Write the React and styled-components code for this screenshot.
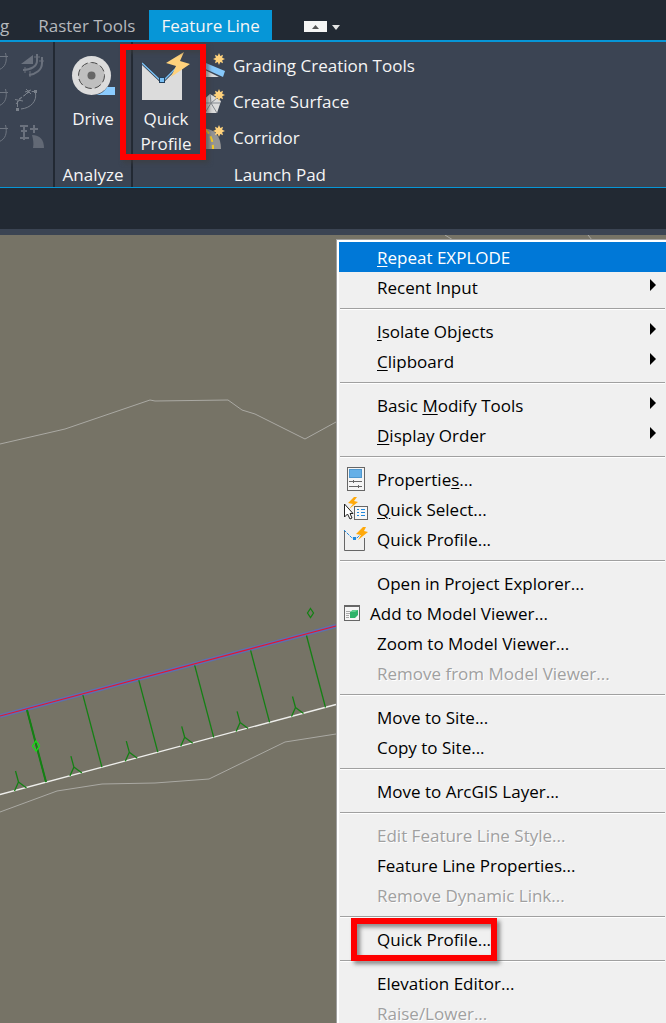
import React from "react";
import styled, { createGlobalStyle } from "styled-components";

const App = () => {
  return (
    <Page>
      <GlobalStyle />
      <TabBar>
        <Tab>g</Tab>
        <Tab>Raster Tools</Tab>
        <Tab $active>Feature Line</Tab>
        <MinimizeButton aria-label="Minimize ribbon">
          <MinimizeIcon />
        </MinimizeButton>
      </TabBar>

      <Ribbon>
        <EditPanel>
          <IconGrid>
            <ToolButton aria-label="Fillet"><ArcIcon /></ToolButton>
            <ToolButton aria-label="Stepped offset"><SteppedIcon /></ToolButton>
            <ToolButton aria-label="Fit curve"><ArcIcon /></ToolButton>
            <ToolButton aria-label="Smooth"><FitIcon /></ToolButton>
            <ToolButton aria-label="Weed"><ArcIcon /></ToolButton>
            <ToolButton aria-label="Elevations from surface"><ElevationIcon /></ToolButton>
          </IconGrid>
        </EditPanel>
        <Panel>
          <PanelBody>
            <LargeButton $width="76px">
              <DriveIcon />
              Drive
            </LargeButton>
          </PanelBody>
          <PanelTitle>Analyze</PanelTitle>
        </Panel>
        <Panel>
          <PanelBody>
            <LargeButton $width="66px">
              <ProfileIcon />
              Quick Profile
              <ButtonCallout />
            </LargeButton>
            <LaunchList>
              <LaunchButton><GradingIcon />Grading Creation Tools</LaunchButton>
              <LaunchButton><SurfaceIcon />Create Surface</LaunchButton>
              <LaunchButton><CorridorIcon />Corridor</LaunchButton>
            </LaunchList>
          </PanelBody>
          <PanelTitle>Launch Pad</PanelTitle>
        </Panel>
      </Ribbon>
      <FileTabs />

      <Workspace>
        <Drawing />
        <ContextMenu>
          {menuGroups.map((group, i) => (
            <MenuGroup key={i}>
              {group.map((item) => (
                <MenuItem key={item.text} $active={item.active} disabled={item.disabled}>
                  <IconCell $narrow={item.narrow}>{item.icon}</IconCell>
                  <ItemLabel>
                    <Label text={item.text} hotkey={item.hotkey} />
                    {item.callout && <ItemCallout />}
                  </ItemLabel>
                  {item.submenu && <SubmenuArrow />}
                </MenuItem>
              ))}
            </MenuGroup>
          ))}
        </ContextMenu>
      </Workspace>
    </Page>
  );
};

// hotkey is the index of the underlined letter
const Label = ({ text, hotkey }) => {
  if (hotkey === undefined) return text;
  return (
    <>
      {text.slice(0, hotkey)}
      <Hotkey>{text[hotkey]}</Hotkey>
      {text.slice(hotkey + 1)}
    </>
  );
};

const MinimizeIcon = () => (
  <svg width="36" height="12" viewBox="0 0 36 12">
    <rect width="23" height="11" fill="#f5f5f5" />
    <path d="M8 8 L11.5 4 L15 8Z" fill="#555" />
    <path d="M28 4 H36 L32 9Z" fill="#e4e4e4" />
  </svg>
);

const ArcIcon = () => (
  <svg width="24" height="24" viewBox="0 0 24 24" fill="none" stroke="#6f7681">
    <path d="M16 3.5 h8 M21.5 0 c2 8 0 14 -6 16.5" />
  </svg>
);

const SteppedIcon = () => (
  <svg width="24" height="24" viewBox="0 0 24 24" fill="none" stroke="#6a717d" strokeWidth="2">
    <path d="M1 11 L13 2 V11Z" fill="#6a717d" stroke="none" />
    <path d="M17 1 V8 C17 13 11 17 3 17 M22 4 V10 C22 17 16 21 9 22" />
    <path d="M14 4 h6 M19 8 h5 M5 14 v6 M10 18 v6" strokeWidth="1" />
  </svg>
);

const FitIcon = () => (
  <svg width="24" height="24" viewBox="0 0 24 24" fill="none" stroke="#7a818b">
    <path d="M15.5 4 C17 12 11 19 1 20" />
    <path d="M-2.5 18 L-2.5 12 M-5 10.5 L3 12 M-4 15 L2 8 M4 7 L9 2 M6 0 L11 5 M5 3 L11 1" />
    <path d="M-4 19 h3 v3 h-3Z M14 1 h3 v3 h-3Z" fill="#7a818b" stroke="none" />
    <path d="M-1 10 L10 2.5 H14" strokeDasharray="3 2" />
  </svg>
);

const ElevationIcon = () => (
  <svg width="24" height="24" viewBox="0 0 24 24" fill="none" stroke="#6a717d">
    <path d="M12 10 C20 10 24 15 24 23 H13 C14 18 13 14 12 10Z" fill="#626975" stroke="none" />
    <path d="M0 1 h8 M4 1 v14 M1 6 h6 M10 4 h8 M14 0 v8 M0 13 h9" strokeWidth="2" />
  </svg>
);

const DriveIcon = () => (
  <svg width="48" height="48" viewBox="0 0 48 48">
    <path d="M27 43 C32 42 36 39 38 35 H46 V43Z" fill="#8bccff" />
    <circle cx="22.5" cy="23.5" r="19.5" fill="#dcdcdc" />
    <circle cx="22.5" cy="23.5" r="13" fill="#bfbfbf" stroke="#4a4a4a" strokeWidth="1" strokeDasharray="7 3" />
    <circle cx="22.5" cy="23.5" r="4" fill="#666" />
  </svg>
);

const ProfileIcon = () => (
  <svg width="48" height="48" viewBox="0 0 48 48">
    <path d="M0 11 L20 30 L40 11 V48 H0Z" fill="#dcdcdc" />
    <path d="M0 11 L18 28 H22 L36 14" fill="none" stroke="#333c4a" strokeWidth="3" />
    <path d="M0 11 L18 28 H22 L36 14" fill="none" stroke="#79c0f5" strokeWidth="1.4" />
    <rect x="17.5" y="25.5" width="5" height="5" fill="#79c0f5" stroke="#23405c" />
    <path d="M42 0 L24 11 L34 14 L29 25 L48 12 L38 9Z" fill="#ffd27c" />
  </svg>
);

const Sun = () => (
  <path
    d="M18 0 L19.3 3 L22 1.7 L21.2 4.7 L24 6 L21.2 7.3 L22 10.3 L19.3 9 L18 12 L16.7 9 L14 10.3 L14.8 7.3 L12 6 L14.8 4.7 L14 1.7 L16.7 3Z"
    fill="#ffd27c"
  />
);

const GradingIcon = () => (
  <svg width="24" height="24" viewBox="0 0 24 24">
    <path d="M0 8 L24 18 L22 24 L0 14Z" fill="#86c8fa" />
    <path d="M0 15 L18 24 H0Z" fill="#dcdcdc" />
    <Sun />
  </svg>
);

const SurfaceIcon = () => (
  <svg width="24" height="24" viewBox="0 0 24 24">
    <path d="M0 13 L9 5 L14 8 L20 12 L16 24 H4Z" fill="#dcdcdc" />
    <path d="M0 14 H19 M10 14 L9 5 M10 14 L4 24 M10 14 L16 24 M10 14 L16 9" stroke="#858a90" fill="none" />
    <Sun />
  </svg>
);

const CorridorIcon = () => (
  <svg width="24" height="24" viewBox="0 0 24 24">
    <path d="M0 4 C12 2 20 10 20 24 H0Z" fill="#959595" />
    <path d="M4 4 C10 10 12 16 12 24" fill="none" stroke="#f7cd25" strokeWidth="2" strokeDasharray="6 3" />
    <Sun />
  </svg>
);

const PropertiesIcon = () => (
  <svg width="24" height="26" viewBox="0 0 24 26" fill="none" stroke="#666">
    <rect x="3.5" y="1.5" width="17" height="23" fill="#f5f5f5" />
    <rect x="5.5" y="3.5" width="12" height="8" fill="#66b0e7" stroke="#4f98cf" />
    <path d="M5 15.5 h13 M9.5 14 v3 M5 20.5 h13 M14.5 19 v3" />
  </svg>
);

const QuickSelectIcon = () => (
  <svg width="24" height="26" viewBox="0 0 24 26">
    <path d="M10 1 L4 7 L9 8 L5 13 L14 6 L10 5 L13 1Z" fill="#ffa90a" />
    <rect x="10.5" y="10.5" width="13" height="13" fill="#f7f7f7" stroke="#666" />
    <path d="M13 13.5 h2 M13 16.5 h2 M13 19.5 h2 M17 13.5 h4 M17 16.5 h4 M17 19.5 h4" stroke="#2089dd" />
    <path d="M0.5 8 V21 L3.5 18 L6 23 L8 22 L6 17.5 H9Z" fill="#fff" stroke="#222" />
  </svg>
);

const QuickProfileIcon = () => (
  <svg width="24" height="26" viewBox="0 0 24 26" fill="none">
    <path d="M0.5 5 V24.5 H20.5 V12" stroke="#666" />
    <path d="M0 4 L8 12 H13 L18 7" stroke="#2089dd" strokeDasharray="3 1" />
    <rect x="9" y="11" width="3" height="3" fill="#2089dd" />
    <path d="M19 1 L12 8 L17 9 L14 14 L24 6 L20 5 L22 1Z" fill="#ffa90a" />
  </svg>
);

const ModelViewerIcon = () => (
  <svg width="16" height="18" viewBox="0 0 16 18">
    <rect x="0.5" y="1.5" width="15" height="15" fill="#f5f5f5" stroke="#666" />
    <rect x="0" y="1" width="16" height="2" fill="#666" />
    <path d="M2 7.5 h4 M2 9.5 h4 M2 11.5 h3 M2 13.5 h3" stroke="#aaa" />
    <path d="M6 8 L9 6 H14 V11 L11 14 H6Z" fill="#2fb36a" />
    <path d="M6 8 L9 6 H14 L11 8Z" fill="#62cf90" />
  </svg>
);

const SubmenuArrow = () => (
  <ArrowSvg width="6" height="12" viewBox="0 0 6 12">
    <path d="M0 0 L6 6 L0 12Z" fill="#000" />
  </ArrowSvg>
);

const hatchLines = [0, 1, 2, 3, 4, 5];

const Drawing = () => (
  <DrawingSvg>
    <g fill="none" stroke="#aaa9a3">
      <polyline points="0,209 65,194 150,165 155,166 228,165 242,175 255,179 305,204 336,187" />
      <polyline points="0,577 57,556 102,549 155,548 209,544 285,507 336,499" />
      <path d="M445 0 L453 5 M588 0 L592 5" />
    </g>
    <path d="M0 481 L336 391" stroke="#5e6faf" strokeWidth="4" />
    <path d="M0 481 L336 391" stroke="#e6142f" strokeWidth="1.2" />
    <path d="M0 559.5 L336 469.5" stroke="#efefec" strokeWidth="1.3" />
    <g fill="none" stroke="#148014" strokeWidth="1.3">
      {hatchLines.map((n) => (
        <g key={n}>
          <path d={`M${27 + n * 55.9} ${475 - n * 14.9} l19 72`} />
          <path d={`M${15.5 + n * 55.4} ${536 - n * 14.9} l3 11 l-4 9 m4 -9 l8 6`} />
        </g>
      ))}
      <path d="M27 475 l19 72" strokeWidth="2" />
      <path d="M310.5 373.5 l3 4.5 l-3 4.5 l-3 -4.5Z" />
    </g>
    <path d="M36 506 l3.5 5 l-3.5 5 l-3.5 -5Z" fill="none" stroke="#14e014" strokeWidth="1.3" />
  </DrawingSvg>
);

const menuGroups = [
  [
    { text: "Repeat EXPLODE", hotkey: 0, active: true },
    { text: "Recent Input", submenu: true },
  ],
  [
    { text: "Isolate Objects", hotkey: 0, submenu: true },
    { text: "Clipboard", hotkey: 0, submenu: true },
  ],
  [
    { text: "Basic Modify Tools", hotkey: 6, submenu: true },
    { text: "Display Order", hotkey: 0, submenu: true },
  ],
  [
    { text: "Properties...", hotkey: 9, icon: <PropertiesIcon /> },
    { text: "Quick Select...", hotkey: 0, icon: <QuickSelectIcon /> },
    { text: "Quick Profile...", icon: <QuickProfileIcon /> },
  ],
  [
    { text: "Open in Project Explorer..." },
    { text: "Add to Model Viewer...", icon: <ModelViewerIcon />, narrow: true },
    { text: "Zoom to Model Viewer..." },
    { text: "Remove from Model Viewer...", disabled: true },
  ],
  [{ text: "Move to Site..." }, { text: "Copy to Site..." }],
  [{ text: "Move to ArcGIS Layer..." }],
  [
    { text: "Edit Feature Line Style...", disabled: true },
    { text: "Feature Line Properties..." },
    { text: "Remove Dynamic Link...", disabled: true },
  ],
  [{ text: "Quick Profile...", callout: true }],
  [{ text: "Elevation Editor..." }, { text: "Raise/Lower...", disabled: true }],
];

const GlobalStyle = createGlobalStyle`
  * {
    box-sizing: border-box;
  }
  body {
    margin: 0;
    font-family: "Open Sans", "Noto Sans", sans-serif;
    font-size: 17px;
  }
  button {
    border: 0;
    padding: 0;
    background: none;
    color: inherit;
    font: inherit;
  }
`;

const Page = styled.div`
  display: flex;
  flex-direction: column;
  height: 100vh;
  overflow: hidden;
`;

const TabBar = styled.nav`
  display: flex;
  align-items: flex-end;
  height: 42px;
  padding-top: 10px;
  background: #222933;
  border-bottom: 2px solid #0696d7;
  white-space: nowrap;

  & > :first-child {
    padding-left: 0;
  }
`;

const Tab = styled.button`
  height: 30px;
  padding: ${(props) => (props.$active ? "0 12px" : "0 14px 0 15px")};
  line-height: 32px;
  color: ${(props) => (props.$active ? "#f5f5f5" : "#b5b8bd")};
  background: ${(props) => (props.$active ? "#0696d7" : "transparent")};
`;

const MinimizeButton = styled.button`
  display: flex;
  align-items: center;
  height: 30px;
  margin-left: 32px;
  padding-top: 4px;
`;

const Ribbon = styled.div`
  display: flex;
  height: 146px;
  color: #f5f5f5;
  background: #3b4453;
  border-bottom: 1px solid #0696d7;
`;

const Panel = styled.section`
  display: flex;
  flex-direction: column;
  justify-content: space-between;
  border-left: 2px solid #222933;
`;

const EditPanel = styled.section`
  display: flex;
  justify-content: flex-end;
  width: 53px;
  overflow: hidden;
`;

const IconGrid = styled.div`
  display: grid;
  grid-template-columns: 24px 24px;
  grid-auto-rows: 36px;
  align-content: start;
  column-gap: 12px;
  padding: 5px 9px 0 0;
`;

const ToolButton = styled.button`
  display: flex;
  align-items: center;

  svg {
    overflow: visible;
  }
`;

const PanelBody = styled.div`
  display: flex;
`;

const PanelTitle = styled.div`
  line-height: 24px;
  text-align: center;
`;

const LargeButton = styled.button`
  position: relative;
  display: flex;
  flex-direction: column;
  align-items: center;
  width: ${(props) => props.$width};
  padding-top: 10px;
  line-height: 25px;

  svg {
    margin-bottom: 6px;
  }
`;

const LaunchList = styled.div`
  padding: 5px 12px 0 2px;
`;

const LaunchButton = styled.button`
  display: flex;
  align-items: center;
  gap: 8px;
  height: 36px;
  white-space: nowrap;
`;

const Callout = styled.span`
  position: absolute;
  border: 6px solid #fe0000;
  filter: drop-shadow(3px 3px 2px rgba(60, 60, 60, 0.6));
  pointer-events: none;
`;

const ButtonCallout = styled(Callout)`
  inset: 2px -7px -4px -13px;
  z-index: 1;
`;

const ItemCallout = styled(Callout)`
  inset: -5px -6px -6px -26px;
`;

const FileTabs = styled.div`
  flex: none;
  height: 47px;
  background: #222933;
  border-bottom: 6px solid #3b4453;
`;

const Workspace = styled.main`
  position: relative;
  flex: 1;
  min-height: 0;
  background: #767366;
`;

const DrawingSvg = styled.svg`
  position: absolute;
  inset: 0;
  width: 100%;
  height: 100%;
`;

const ContextMenu = styled.div`
  position: absolute;
  top: 4px;
  left: 336px;
  right: 0;
  padding: 2px 0 0 2px;
  color: #000;
  background: #f0f0f0;
  border-top: 1px solid #a0a0a0;
  border-left: 1px solid #a0a0a0;
  box-shadow: inset 2px 2px #fff;
`;

const MenuGroup = styled.div`
  & + &::before {
    content: "";
    display: block;
    height: 1px;
    margin: 6px 1px;
    background: #fff;
    border-top: 1px solid #a0a0a0;
  }
`;

const MenuItem = styled.button`
  display: flex;
  align-items: center;
  width: 100%;
  height: 30px;
  padding-right: 10px;
  text-align: left;
  color: ${(props) => (props.$active ? "#fff" : "#000")};
  background: ${(props) => (props.$active ? "#0078d7" : "transparent")};

  &:disabled {
    color: #a0a0a0;
    text-shadow: 1px 1px #fff;
  }
`;

const IconCell = styled.span`
  display: flex;
  flex: none;
  width: ${(props) => (props.$narrow ? "31px" : "38px")};
  padding-left: 5px;
`;

const ItemLabel = styled.span`
  position: relative;
  padding-top: 2px;
  line-height: 30px;
  white-space: nowrap;
`;

const Hotkey = styled.span`
  text-decoration: underline;
  text-decoration-thickness: 1px;
  text-underline-offset: 2px;
`;

const ArrowSvg = styled.svg`
  margin: 0 0 4px auto;
`;

export default App;
